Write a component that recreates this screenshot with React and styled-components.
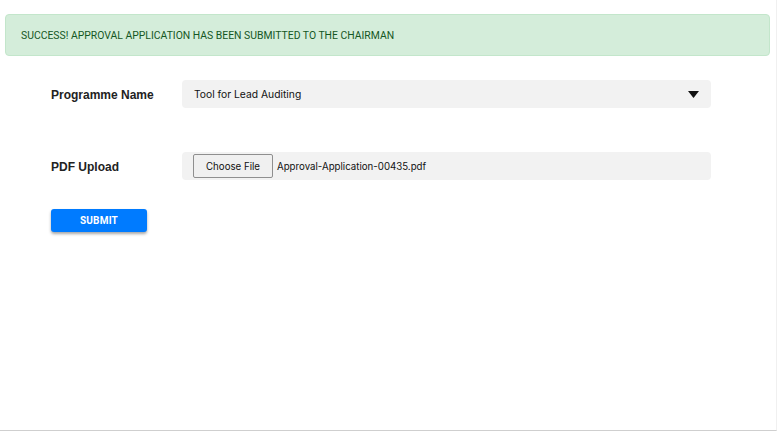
import React from "react";
import styled, { createGlobalStyle } from "styled-components";

const Global = createGlobalStyle`
  html, body { margin: 0; padding: 0; background: #fff; }
  body { font-family: "Liberation Sans", Arial, sans-serif; }
  * { box-sizing: border-box; }
`;

const Page = styled.div`
  width: 777px;
  height: 431px;
  border-right: 1px solid #f0f0f0;
  border-bottom: 1px solid #cfcfcf;
  padding: 14px 6px 0 5px;
`;

const Alert = styled.div`
  height: 42px;
  background: #d4edda;
  border: 1px solid #c3e6cb;
  border-radius: 4px;
  color: #155724;
  font-family: Roboto, "Liberation Sans", sans-serif;
  font-size: 10.4px;
  text-transform: uppercase;
  display: flex;
  align-items: center;
  padding-left: 15px;
`;

const Form = styled.form`
  display: flex;
  flex-direction: column;
  padding: 24px 0 0 46px;
`;

const Row = styled.div`
  display: grid;
  grid-template-columns: 131px 529px;
  align-items: center;
  margin-bottom: ${(p) => p.$gap}px;
`;

const Label = styled.label`
  font-family: "Liberation Sans", Arial, sans-serif;
  font-weight: bold;
  font-size: 12px;
  color: #222;
  padding-top: 2px;
`;

const Field = styled.div`
  height: 28px;
  background: #f2f2f2;
  border-radius: 4px;
  display: flex;
  align-items: center;
  padding: 0 12px;
  font-family: Inter, "Noto Sans", sans-serif;
  font-size: ${(p) => p.$size}px;
  color: #111;
`;

const SelectText = styled.span`
  flex: 1;
`;

const FileButton = styled.span`
  display: inline-flex;
  align-items: center;
  justify-content: center;
  width: 80px;
  height: 24px;
  margin-left: -1px;
  border: 1px solid #8f8f8f;
  background: #f0f0f0;
  border-radius: 2px;
  color: #111;
`;

const FileName = styled.span`
  margin-left: 4px;
`;

const Submit = styled.button`
  width: 96px;
  height: 23px;
  border: none;
  border-radius: 3px;
  background: #007bff;
  color: #fff;
  font-family: Roboto, "Liberation Sans", sans-serif;
  font-weight: bold;
  font-size: 10px;
  letter-spacing: 0.2px;
  box-shadow: 0 2px 3px rgba(0, 0, 0, 0.35);
  padding: 0;
`;

const Caret = () => (
  <svg width="11" height="7" viewBox="0 0 11 7">
    <path d="M0 0 L11 0 L5.5 7 Z" fill="#111" />
  </svg>
);

export default function App() {
  return (
    <>
      <Global />
      <Page>
        <Alert>Success! Approval application has been submitted to the Chairman</Alert>
        <Form onSubmit={(e) => e.preventDefault()}>
          <Row $gap={44}>
            <Label>Programme Name</Label>
            <Field $size={10.3}>
              <SelectText>Tool for Lead Auditing</SelectText>
              <Caret />
            </Field>
          </Row>
          <Row $gap={29}>
            <Label>PDF Upload</Label>
            <Field $size={9.7}>
              <FileButton>Choose File</FileButton>
              <FileName>Approval-Application-00435.pdf</FileName>
            </Field>
          </Row>
          <div>
            <Submit type="submit">SUBMIT</Submit>
          </div>
        </Form>
      </Page>
    </>
  );
}
